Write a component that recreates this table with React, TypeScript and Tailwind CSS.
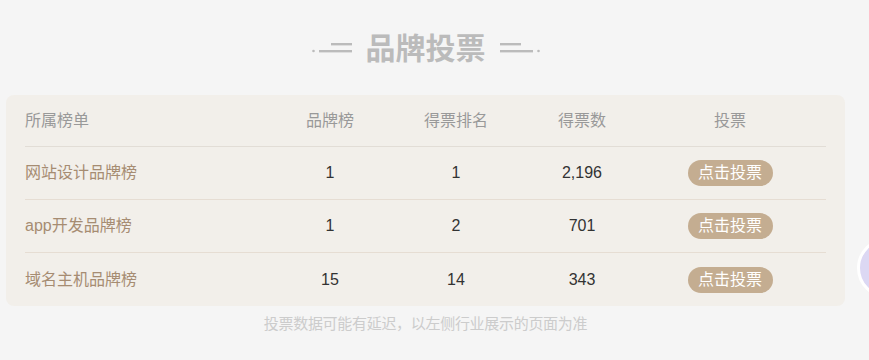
import React from "react";

type Row = {
  name: string;
  rank: number;
  pos: number;
  votes: string;
};

const rows: Row[] = [
  { name: "网站设计品牌榜", rank: 1, pos: 1, votes: "2,196" },
  { name: "app开发品牌榜", rank: 1, pos: 2, votes: "701" },
  { name: "域名主机品牌榜", rank: 15, pos: 14, votes: "343" },
];

const cols = "grid grid-cols-[243px_124px_128px_124px_172px] items-center";

// the little ·═ ornament beside the heading
const Deco = ({ flip }: { flip?: boolean }) => (
  <svg width="42" height="14" viewBox="0 0 42 14" className={flip ? "-scale-x-100" : ""}>
    <circle cx="1.5" cy="9" r="1.3" fill="#bbb" />
    <rect x="7" y="8" width="33" height="2.4" fill="#bbb" />
    <rect x="19" y="1" width="21" height="2.4" fill="#bbb" />
  </svg>
);

const App = () => {
  return (
    <div
      className="relative h-[360px] w-[869px] overflow-hidden bg-[#f5f5f5]"
      style={{ fontFamily: '"Liberation Sans", "Noto Sans CJK SC", sans-serif' }}
    >
      <div className="mx-[6px] w-[839px]">
        <div className="flex h-[95px] items-center justify-center gap-3 pt-[2px]">
          <Deco />
          <h2 className="text-[30px] font-bold leading-none text-[#bbbbbb]">品牌投票</h2>
          <Deco flip />
        </div>

        <div className="rounded-lg bg-[#f2efea] px-[19px]">
          <div className={`${cols} h-[52px] border-b border-[#e2ddd6] text-[16px] text-[#999]`}>
            <div>所属榜单</div>
            <div className="text-center">品牌榜</div>
            <div className="text-center">得票排名</div>
            <div className="text-center">得票数</div>
            <div className="text-center">投票</div>
          </div>
          {rows.map((r, i) => (
            <div
              key={r.name}
              className={`${cols} h-[53px] text-[16px] ${i < rows.length - 1 ? "border-b border-[#e6ddd3]" : ""}`}
            >
              <div className="text-[#a68c72]">{r.name}</div>
              <div className="text-center text-[#333]">{r.rank}</div>
              <div className="text-center text-[#333]">{r.pos}</div>
              <div className="text-center text-[#333]">{r.votes}</div>
              <div className="flex justify-center">
                <button className="h-[26px] w-[85px] rounded-full bg-[#c4ad91] text-[16px] leading-none text-white">
                  点击投票
                </button>
              </div>
            </div>
          ))}
        </div>

        <p className="mt-[7px] text-center text-[15px] tracking-[-0.3px] text-[#cccccc]">
          投票数据可能有延迟，以左侧行业展示的页面为准
        </p>
      </div>

      {/* floating chat bubble at right edge */}
      <div className="absolute left-[857px] top-[238px] h-[60px] w-[60px] rounded-full border-[3px] border-white bg-[#dcd8f3]" />
    </div>
  );
};

export default App;
